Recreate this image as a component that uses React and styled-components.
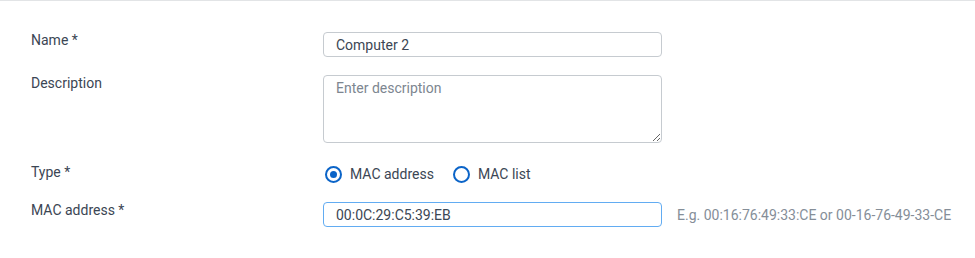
import React, {useState} from 'react'
import styled, {createGlobalStyle} from 'styled-components'

const GlobalStyle = createGlobalStyle`
  body {
    margin: 0;
    background: #fff;
    font-family: Roboto, "Noto Sans", sans-serif;
    color: #3b4654;
  }
`

export const App = () => {
  const [type, setType] = useState('address')

  return (
    <Page>
      <GlobalStyle />
      <Form>
        <Label>Name *</Label>
        <Field>
          <Input defaultValue="Computer 2" />
        </Field>

        <Label>Description</Label>
        <Field>
          <TextArea placeholder="Enter description" />
        </Field>

        <Label offset={3}>Type *</Label>
        <Field>
          <RadioGroup>
            <RadioOption onClick={() => setType('address')}>
              <RadioDot checked={type === 'address'} />
              MAC address
            </RadioOption>
            <RadioOption onClick={() => setType('list')}>
              <RadioDot checked={type === 'list'} />
              MAC list
            </RadioOption>
          </RadioGroup>
        </Field>

        <Label>MAC address *</Label>
        <Field>
          <Input focused defaultValue="00:0C:29:C5:39:EB" />
          <Hint>E.g. 00:16:76:49:33:CE or 00-16-76-49-33-CE</Hint>
        </Field>
      </Form>
    </Page>
  )
}

const Page = styled.div`
  border-top: 1px solid #e2e4e6;
  height: 257px;
`

const Form = styled.div`
  display: grid;
  grid-template-columns: 292px 1fr;
  row-gap: 18px;
  padding: 31px 0 0 31px;
`

const Label = styled.div`
  font-size: 14px;
  line-height: 17px;
  padding-top: ${p => p.offset || 0}px;
  color: #3b4654;
`

const Field = styled.div`
  display: flex;
  align-items: center;
  gap: 15px;
`

const Input = styled.input`
  box-sizing: border-box;
  width: 339px;
  height: 25px;
  padding: 0 12px;
  border: 1px solid ${p => (p.focused ? '#62acf2' : '#c6cbd0')};
  border-radius: 4px;
  font-family: inherit;
  font-size: 14px;
  color: #3b4654;
  outline: none;
`

const TextArea = styled.textarea`
  box-sizing: border-box;
  display: block;
  width: 339px;
  height: 68px;
  padding: 4px 12px;
  border: 1px solid #c6cbd0;
  border-radius: 4px;
  font-family: inherit;
  font-size: 14px;
  line-height: 17px;
  color: #3b4654;
  outline: none;

  &::placeholder {
    color: #7d8690;
  }
`

const RadioGroup = styled.div`
  display: flex;
  align-items: center;
  gap: 19px;
  height: 23px;
  box-sizing: border-box;
  padding: 3px 0 0 2px;
`

const RadioOption = styled.label`
  display: flex;
  align-items: center;
  gap: 8px;
  font-size: 14px;
  color: #3b4654;
  cursor: pointer;
`

const RadioDot = styled.span`
  position: relative;
  box-sizing: border-box;
  width: 17px;
  height: 17px;
  border: 2px solid #0b64c8;
  border-radius: 50%;

  &::after {
    content: '';
    display: ${p => (p.checked ? 'block' : 'none')};
    position: absolute;
    left: 50%;
    top: 50%;
    width: 7px;
    height: 7px;
    margin: -3.5px 0 0 -3.5px;
    border-radius: 50%;
    background: #0b64c8;
  }
`

const Hint = styled.span`
  font-size: 14px;
  color: #858e98;
  white-space: nowrap;
`

export default App
